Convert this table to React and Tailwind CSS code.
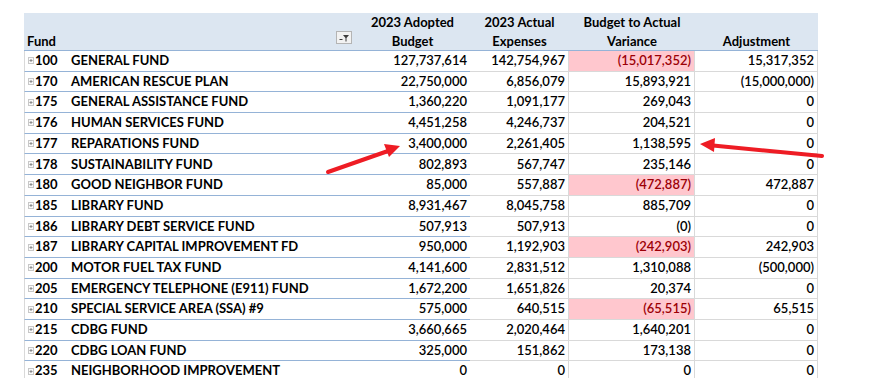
import React from "react";

const rows = [
  ["100", "GENERAL FUND", "127,737,614", "142,754,967", "(15,017,352)", "15,317,352", true],
  ["170", "AMERICAN RESCUE PLAN", "22,750,000", "6,856,079", "15,893,921", "(15,000,000)", false],
  ["175", "GENERAL ASSISTANCE FUND", "1,360,220", "1,091,177", "269,043", "0", false],
  ["176", "HUMAN SERVICES FUND", "4,451,258", "4,246,737", "204,521", "0", false],
  ["177", "REPARATIONS FUND", "3,400,000", "2,261,405", "1,138,595", "0", false],
  ["178", "SUSTAINABILITY FUND", "802,893", "567,747", "235,146", "0", false],
  ["180", "GOOD NEIGHBOR FUND", "85,000", "557,887", "(472,887)", "472,887", true],
  ["185", "LIBRARY FUND", "8,931,467", "8,045,758", "885,709", "0", false],
  ["186", "LIBRARY DEBT SERVICE FUND", "507,913", "507,913", "(0)", "0", false],
  ["187", "LIBRARY CAPITAL IMPROVEMENT FD", "950,000", "1,192,903", "(242,903)", "242,903", true],
  ["200", "MOTOR FUEL TAX FUND", "4,141,600", "2,831,512", "1,310,088", "(500,000)", false],
  ["205", "EMERGENCY TELEPHONE (E911) FUND", "1,672,200", "1,651,826", "20,374", "0", false],
  ["210", "SPECIAL SERVICE AREA (SSA) #9", "575,000", "640,515", "(65,515)", "65,515", true],
  ["215", "CDBG FUND", "3,660,665", "2,020,464", "1,640,201", "0", false],
  ["220", "CDBG LOAN FUND", "325,000", "151,862", "173,138", "0", false],
  ["235", "NEIGHBORHOOD IMPROVEMENT", "0", "0", "0", "0", false],
];

function ExpandIcon() {
  return (
    <svg width="6" height="7" viewBox="0 0 6 7" className="shrink-0">
      <rect x="0.5" y="0.5" width="5" height="6" fill="#fafafa" stroke="#c8c8c8" />
      <path d="M1.5 3.5h3M3 2v3" stroke="#8c8c8c" strokeWidth="1" />
    </svg>
  );
}

function FilterButton() {
  return (
    <div className="w-[16px] h-[13px] border border-[#b4b4b4] bg-[#f2f2f2] flex items-center justify-center">
      <svg width="10" height="8" viewBox="0 0 10 8">
        <path d="M4 1h6L7.5 4v3.5h-1V4z" fill="#3c3c3c" />
        <path d="M0.5 5.5h3" stroke="#3c3c3c" strokeWidth="1" />
      </svg>
    </div>
  );
}

export default function App() {
  const num = "h-full flex items-center justify-end pr-[3px]";
  return (
    <div
      className="relative bg-white w-[890px] h-[378px] overflow-hidden text-black text-[13px]"
      style={{ fontFamily: "Lato, 'Noto Sans', sans-serif" }}
    >
      <div className="ml-[24px] pt-[13px] w-[794px]">
        {/* header */}
        <div className="grid grid-cols-[331px_115px_99px_126px_123px] h-[38px] bg-[#dce6f1] border-b border-[#95b3d7] font-bold leading-[19px]">
          <div className="flex items-end justify-between pl-[3px] pr-[3px]">
            <span>Fund</span>
            <div className="mb-[7px]">
              <FilterButton />
            </div>
          </div>
          <div className="flex flex-col items-center justify-end">
            <span>2023 Adopted</span>
            <span>Budget</span>
          </div>
          <div className="flex flex-col items-center justify-end">
            <span>2023 Actual</span>
            <span>Expenses</span>
          </div>
          <div className="flex flex-col items-center justify-end">
            <span>Budget to Actual</span>
            <span>Variance</span>
          </div>
          <div className="flex flex-col items-center justify-end">
            <span>Adjustment</span>
          </div>
        </div>

        {/* body */}
        {rows.map(([code, name, budget, actual, variance, adj, neg]) => (
          <div
            key={code}
            className="grid grid-cols-[331px_115px_99px_126px_123px] h-[20.7px] font-semibold"
          >
            <div className="h-full flex items-center gap-[1px] pl-[3px] border-b border-l border-[#95b3d7] border-l-[#d9d9d9] font-bold">
              <ExpandIcon />
              <span className="w-[35px]">{code}</span>
              <span className="whitespace-nowrap">{name}</span>
            </div>
            <div className={`${num} border-b border-[#95b3d7]`}>{budget}</div>
            <div className={`${num} border-b border-r border-[#d9d9d9]`}>{actual}</div>
            <div
              className={`${num} border-b border-r border-[#d9d9d9] ${
                neg ? "bg-[#ffc7ce] text-[#9c0006]" : ""
              }`}
            >
              {variance}
            </div>
            <div className={`${num} border-b border-r border-[#d9d9d9]`}>{adj}</div>
          </div>
        ))}
      </div>

      {/* annotation arrows */}
      <svg className="absolute inset-0 pointer-events-none" width="890" height="378">
        <line x1="328" y1="172" x2="388" y2="151" stroke="#ee1c24" strokeWidth="4" strokeLinecap="round" />
        <polygon points="400,146 389,157 384,144" fill="#ee1c24" />
        <line x1="822" y1="156" x2="713" y2="145.5" stroke="#ee1c24" strokeWidth="4" strokeLinecap="round" />
        <polygon points="700,144 714,152 715,138" fill="#ee1c24" />
      </svg>
    </div>
  );
}
